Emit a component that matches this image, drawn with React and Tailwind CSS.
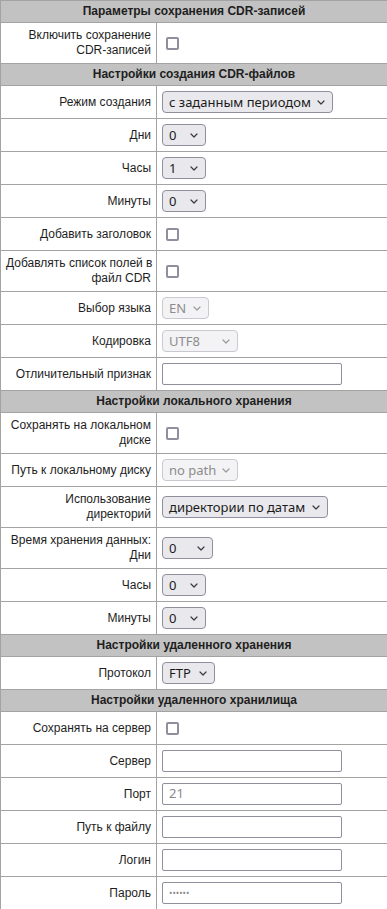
import React from "react";

const Chevron = ({ color = "#3a3a3a" }) => (
  <svg width="8" height="5" viewBox="0 0 8 5" className="shrink-0">
    <path d="M1 1 L4 4 L7 1" fill="none" stroke={color} strokeWidth="1.2" strokeLinecap="round" strokeLinejoin="round" />
  </svg>
);

const Select = ({ value, w, disabled }) => (
  <div
    className={
      "flex h-[22px] items-center justify-between rounded-[4px] border pl-[6px] pr-[7px] text-[13px] leading-none " +
      (disabled
        ? "border-[#c9c9d0] bg-[#f3f3f5] text-[#8c8c8c]"
        : "border-[#8f8f9d] bg-[#e9e9ed] text-[#1b1b1b]")
    }
    style={{ width: w, fontFamily: '"Noto Sans", sans-serif' }}
  >
    <span className="whitespace-nowrap">{value}</span>
    <Chevron color={disabled ? "#9a9a9a" : "#3a3a3a"} />
  </div>
);

const Checkbox = () => (
  <div className="ml-[4px] h-[13px] w-[13px] rounded-[2px] border-2 border-[#8f8f9d] bg-white" />
);

const TextInput = ({ value, dots }) => (
  <div
    className="flex h-[22px] w-[180px] items-center rounded-[2px] border border-[#8f8f9d] bg-white pl-[6px] text-[13px] text-[#8a8a8a]"
    style={{ fontFamily: '"Noto Sans", sans-serif' }}
  >
    {dots ? <span className="text-[9px] tracking-[0px]">••••••</span> : value}
  </div>
);

const Header = ({ children }) => (
  <tr>
    <td colSpan={2} className="border border-[#a3a3a3] bg-[#c2c2c2] px-[5px] py-[3px] text-center text-[12px] font-bold leading-[15px] text-[#1e1e1e]">
      {children}
    </td>
  </tr>
);

const Row = ({ label, children }) => (
  <tr>
    <td className="whitespace-nowrap border border-[#a3a3a3] px-[5px] py-[5px] text-right align-middle text-[12px] leading-[15px] text-[#1e1e1e]">
      {label}
    </td>
    <td className="border border-[#a3a3a3] px-[5px] py-[5px] align-middle">
      <div className="flex min-h-[22px] items-center">{children}</div>
    </td>
  </tr>
);

export default function App() {
  return (
    <div className="w-[387px] bg-white" style={{ fontFamily: '"Liberation Sans", Arial, sans-serif' }}>
      <table className="w-[388px] table-fixed border-collapse">
        <colgroup>
          <col className="w-[156px]" />
          <col />
        </colgroup>
        <tbody>
          <Header>Параметры сохранения CDR-записей</Header>
          <Row label={<>Включить сохранение<br />CDR-записей</>}><Checkbox /></Row>
          <Header>Настройки создания CDR-файлов</Header>
          <Row label="Режим создания"><Select value="с заданным периодом" w={171} /></Row>
          <Row label="Дни"><Select value="0" w={44} /></Row>
          <Row label="Часы"><Select value="1" w={44} /></Row>
          <Row label="Минуты"><Select value="0" w={44} /></Row>
          <Row label="Добавить заголовок"><Checkbox /></Row>
          <Row label={<>Добавлять список полей в<br />файл CDR</>}><Checkbox /></Row>
          <Row label="Выбор языка"><Select value="EN" w={47} disabled /></Row>
          <Row label="Кодировка"><Select value="UTF8" w={76} disabled /></Row>
          <Row label="Отличительный признак"><TextInput value="" /></Row>
          <Header>Настройки локального хранения</Header>
          <Row label={<>Сохранять на локальном<br />диске</>}><Checkbox /></Row>
          <Row label="Путь к локальному диску"><Select value="no path" w={76} disabled /></Row>
          <Row label={<>Использование<br />директорий</>}><Select value="директории по датам" w={166} /></Row>
          <Row label={<>Время хранения данных:<br />Дни</>}><Select value="0" w={51} /></Row>
          <Row label="Часы"><Select value="0" w={44} /></Row>
          <Row label="Минуты"><Select value="0" w={44} /></Row>
          <Header>Настройки удаленного хранения</Header>
          <Row label="Протокол"><Select value="FTP" w={53} /></Row>
          <Header>Настройки удаленного хранилища</Header>
          <Row label="Сохранять на сервер"><Checkbox /></Row>
          <Row label="Сервер"><TextInput value="" /></Row>
          <Row label="Порт"><TextInput value="21" /></Row>
          <Row label="Путь к файлу"><TextInput value="" /></Row>
          <Row label="Логин"><TextInput value="" /></Row>
          <Row label="Пароль"><TextInput dots /></Row>
        </tbody>
      </table>
    </div>
  );
}
